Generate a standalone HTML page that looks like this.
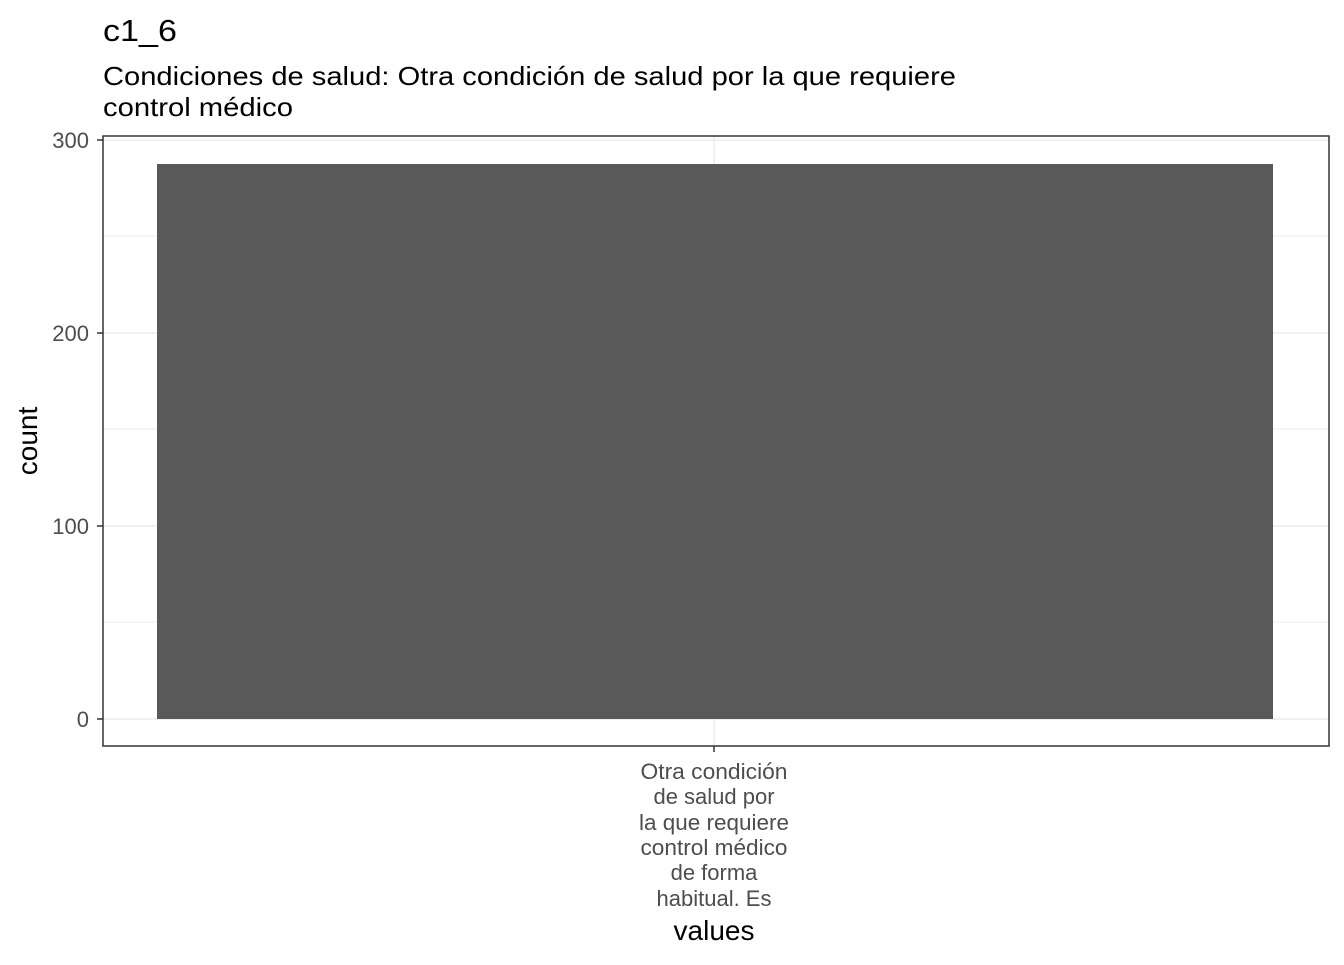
<!DOCTYPE html>
<html><head><meta charset="utf-8"><style>html,body{margin:0;padding:0;background:#fff}</style></head>
<body>
<svg width="1344" height="960" viewBox="0 0 1344 960" xmlns="http://www.w3.org/2000/svg" font-family="Liberation Sans, Arial, sans-serif">
<rect width="1344" height="960" fill="#fff"/>
<text x="103" y="41" font-size="31" fill="#000" textLength="74" lengthAdjust="spacingAndGlyphs">c1_6</text>
<text x="103" y="85" font-size="26" fill="#000" textLength="853" lengthAdjust="spacingAndGlyphs">Condiciones de salud: Otra condición de salud por la que requiere</text>
<text x="103" y="116" font-size="26" fill="#000" textLength="190" lengthAdjust="spacingAndGlyphs">control médico</text>
<g stroke="#ebebeb" stroke-width="1">
<line x1="103" x2="1329" y1="236" y2="236"/>
<line x1="103" x2="1329" y1="429" y2="429"/>
<line x1="103" x2="1329" y1="622" y2="622"/>
</g>
<g stroke="#ebebeb" stroke-width="1.5">
<line x1="103" x2="1329" y1="140" y2="140"/>
<line x1="103" x2="1329" y1="333" y2="333"/>
<line x1="103" x2="1329" y1="526" y2="526"/>
<line x1="103" x2="1329" y1="719" y2="719"/>
<line x1="714" x2="714" y1="136" y2="746"/>
</g>
<rect x="157" y="164" width="1116" height="555" fill="#595959"/>
<rect x="103" y="136" width="1226" height="610" fill="none" stroke="#333" stroke-width="1.5"/>
<g stroke="#333" stroke-width="1.5">
<line x1="97" x2="103" y1="140" y2="140"/>
<line x1="97" x2="103" y1="333" y2="333"/>
<line x1="97" x2="103" y1="526" y2="526"/>
<line x1="97" x2="103" y1="719" y2="719"/>
<line x1="714" x2="714" y1="746" y2="752"/>
</g>
<g font-size="22" fill="#4d4d4d" text-anchor="end">
<text x="89" y="148">300</text>
<text x="89" y="341">200</text>
<text x="89" y="534">100</text>
<text x="89" y="727">0</text>
</g>
<g font-size="22" fill="#4d4d4d" text-anchor="middle">
<text x="714" y="779" textLength="147" lengthAdjust="spacingAndGlyphs">Otra condición</text>
<text x="714" y="804">de salud por</text>
<text x="714" y="830" textLength="150" lengthAdjust="spacingAndGlyphs">la que requiere</text>
<text x="714" y="855" textLength="147" lengthAdjust="spacingAndGlyphs">control médico</text>
<text x="714" y="880">de forma</text>
<text x="714" y="906">habitual. Es</text>
</g>
<text x="714" y="940" font-size="28" text-anchor="middle" fill="#000">values</text>
<text transform="translate(37,441) rotate(-90)" font-size="28" text-anchor="middle" fill="#000">count</text>
</svg>
</body></html>
